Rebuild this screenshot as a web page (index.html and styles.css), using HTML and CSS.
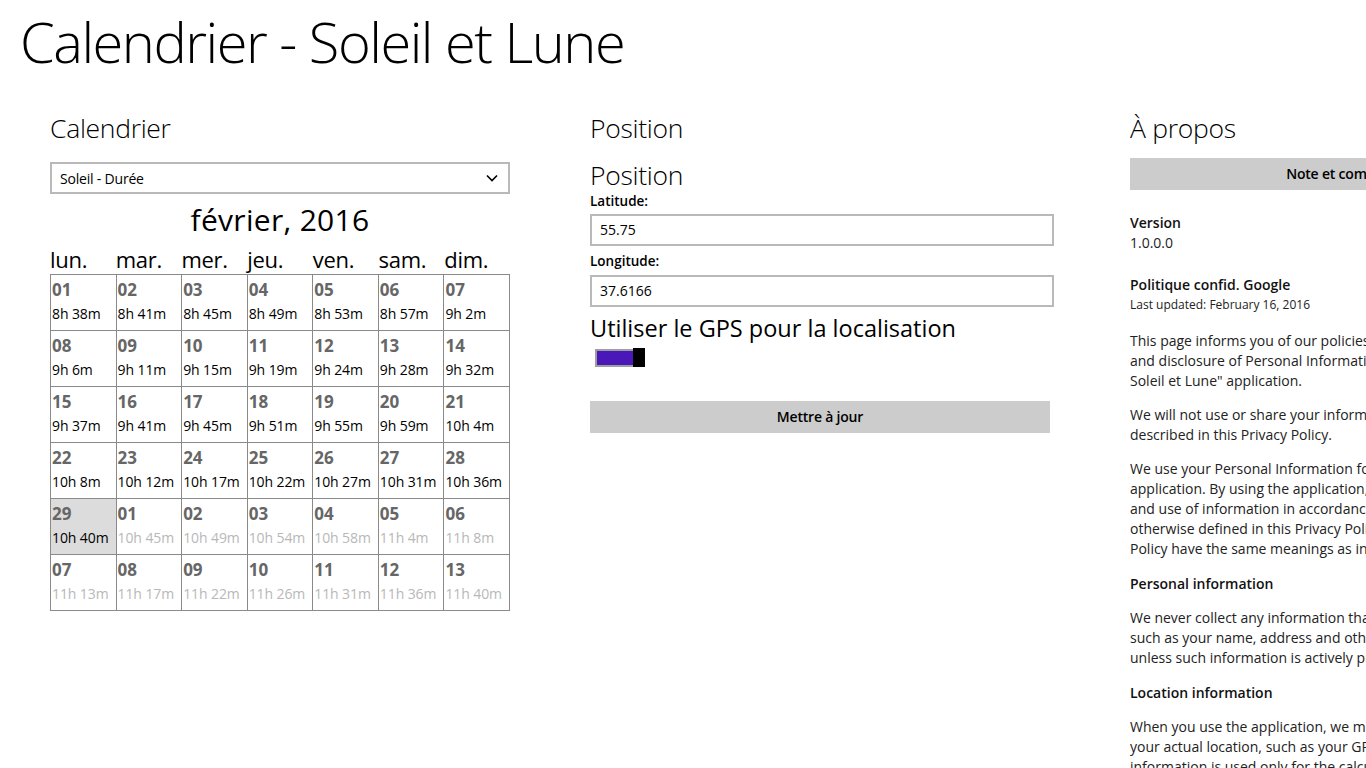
FILE: index.html
```html
<!DOCTYPE html>
<html lang="fr">
<head>
<meta charset="utf-8">
<title>Calendrier - Soleil et Lune</title>
<link rel="stylesheet" href="styles.css">
</head>
<body>
<h1 class="app-title">Calendrier - Soleil et Lune</h1>
<main class="hub">
  <section class="col col-cal">
    <h2 class="col-head">Calendrier</h2>
    <div class="select">
      <span>Soleil - Durée</span>
      <svg class="chev" width="12" height="8" viewBox="0 0 12 8"><path d="M1 1.5 L6 6.5 L11 1.5" fill="none" stroke="#000" stroke-width="1.6"/></svg>
    </div>
    <div class="month">février, 2016</div>
    <div class="weekdays">
      <span>lun.</span><span>mar.</span><span>mer.</span><span>jeu.</span><span>ven.</span><span>sam.</span><span>dim.</span>
    </div>
    <div class="grid">
      <div class="cell"><b>01</b><span>8h 38m</span></div>
      <div class="cell"><b>02</b><span>8h 41m</span></div>
      <div class="cell"><b>03</b><span>8h 45m</span></div>
      <div class="cell"><b>04</b><span>8h 49m</span></div>
      <div class="cell"><b>05</b><span>8h 53m</span></div>
      <div class="cell"><b>06</b><span>8h 57m</span></div>
      <div class="cell"><b>07</b><span>9h 2m</span></div>
      <div class="cell"><b>08</b><span>9h 6m</span></div>
      <div class="cell"><b>09</b><span>9h 11m</span></div>
      <div class="cell"><b>10</b><span>9h 15m</span></div>
      <div class="cell"><b>11</b><span>9h 19m</span></div>
      <div class="cell"><b>12</b><span>9h 24m</span></div>
      <div class="cell"><b>13</b><span>9h 28m</span></div>
      <div class="cell"><b>14</b><span>9h 32m</span></div>
      <div class="cell"><b>15</b><span>9h 37m</span></div>
      <div class="cell"><b>16</b><span>9h 41m</span></div>
      <div class="cell"><b>17</b><span>9h 45m</span></div>
      <div class="cell"><b>18</b><span>9h 51m</span></div>
      <div class="cell"><b>19</b><span>9h 55m</span></div>
      <div class="cell"><b>20</b><span>9h 59m</span></div>
      <div class="cell"><b>21</b><span>10h 4m</span></div>
      <div class="cell"><b>22</b><span>10h 8m</span></div>
      <div class="cell"><b>23</b><span>10h 12m</span></div>
      <div class="cell"><b>24</b><span>10h 17m</span></div>
      <div class="cell"><b>25</b><span>10h 22m</span></div>
      <div class="cell"><b>26</b><span>10h 27m</span></div>
      <div class="cell"><b>27</b><span>10h 31m</span></div>
      <div class="cell"><b>28</b><span>10h 36m</span></div>
      <div class="cell today"><b>29</b><span>10h 40m</span></div>
      <div class="cell other"><b>01</b><span>10h 45m</span></div>
      <div class="cell other"><b>02</b><span>10h 49m</span></div>
      <div class="cell other"><b>03</b><span>10h 54m</span></div>
      <div class="cell other"><b>04</b><span>10h 58m</span></div>
      <div class="cell other"><b>05</b><span>11h 4m</span></div>
      <div class="cell other"><b>06</b><span>11h 8m</span></div>
      <div class="cell other"><b>07</b><span>11h 13m</span></div>
      <div class="cell other"><b>08</b><span>11h 17m</span></div>
      <div class="cell other"><b>09</b><span>11h 22m</span></div>
      <div class="cell other"><b>10</b><span>11h 26m</span></div>
      <div class="cell other"><b>11</b><span>11h 31m</span></div>
      <div class="cell other"><b>12</b><span>11h 36m</span></div>
      <div class="cell other"><b>13</b><span>11h 40m</span></div>
    </div>
  </section>

  <section class="col col-pos">
    <h2 class="col-head">Position</h2>
    <h3 class="sub-head">Position</h3>
    <label class="lbl lbl-lat">Latitude:</label>
    <div class="field field-lat">55.75</div>
    <label class="lbl lbl-lon">Longitude:</label>
    <div class="field field-lon">37.6166</div>
    <div class="gps">Utiliser le GPS pour la localisation</div>
    <div class="toggle"><span class="track"></span><span class="thumb"></span></div>
    <div class="btn">Mettre à jour</div>
  </section>

  <section class="col col-about">
    <h2 class="col-head">À propos</h2>
    <div class="btn btn-rate">Note et commentaires</div>
    <h4 class="a-head a-version">Version</h4>
    <p class="a-line">1.0.0.0</p>
    <h4 class="a-head a-policy">Politique confid. Google</h4>
    <p class="a-small">Last updated: February 16, 2016</p>
    <p class="a-par">This page informs you of our policies regarding the collection, use<br>and disclosure of Personal Information when you use the "Calendrier -<br>Soleil et Lune" application.</p>
    <p class="a-par">We will not use or share your information with anyone except as<br>described in this Privacy Policy.</p>
    <p class="a-par">We use your Personal Information for providing and improving the<br>application. By using the application, you agree to the collection<br>and use of information in accordance with this policy. Unless<br>otherwise defined in this Privacy Policy, terms used in this Privacy<br>Policy have the same meanings as in our Terms and Conditions.</p>
    <h4 class="a-head">Personal information</h4>
    <p class="a-par">We never collect any information that can be used to identify you,<br>such as your name, address and other personal identifying details,<br>unless such information is actively provided by you.</p>
    <h4 class="a-head">Location information</h4>
    <p class="a-par">When you use the application, we may use information about<br>your actual location, such as your GPS coordinates. This<br>information is used only for the calculations of the application.</p>
  </section>
</main>
</body>
</html>
```

FILE: styles.css
```css
html, body {
  margin: 0;
  padding: 0;
  overflow: hidden;
  background: #fff;
  width: 1366px;
  height: 768px;
}
body {
  font-family: "Open Sans", "Noto Sans", sans-serif;
  color: #000;
}
.app-title {
  margin: 0;
  padding: 8px 0 0 20px;
  font-size: 56px;
  font-weight: 300;
  line-height: 67px;
  letter-spacing: -1.5px;
  white-space: nowrap;
}
.hub {
  display: flex;
  align-items: flex-start;
  padding: 37px 0 0 50px;
  width: 2000px;
}
.col {
  flex: 0 0 460px;
  min-width: 0;
  margin-right: 80px;
}
.col-head {
  margin: 0;
  font-size: 26.5px;
  font-weight: 300;
  line-height: 32px;
  letter-spacing: -0.3px;
  white-space: nowrap;
}

/* Calendar */
.select {
  margin-top: 18px;
  height: 28px;
  border: 2px solid #b9b9b9;
  display: flex;
  align-items: center;
  justify-content: space-between;
  padding: 0 10px 0 8px;
  font-size: 14px;
  letter-spacing: -0.2px;
}
.month {
  margin-top: 8px;
  text-align: center;
  font-size: 30px;
  line-height: 36px;
  letter-spacing: 0.3px;
}
.weekdays {
  margin-top: 8px;
  display: grid;
  grid-template-columns: repeat(7, 1fr);
  font-size: 22px;
  line-height: 26px;
  letter-spacing: -0.3px;
}
.grid {
  margin-top: 2px;
  display: grid;
  grid-template-columns: repeat(7, 1fr);
  border-top: 1px solid #8a8a8a;
  border-left: 1px solid #8a8a8a;
}
.cell {
  border-right: 1px solid #8a8a8a;
  border-bottom: 1px solid #8a8a8a;
  display: flex;
  flex-direction: column;
  padding: 5px 0 0 1px;
  box-sizing: border-box;
  height: 56px;
  overflow: hidden;
  white-space: nowrap;
}
.cell b {
  font-size: 17px;
  line-height: 20px;
  color: #666;
  font-weight: 700;
}
.cell span {
  margin-top: 4px;
  font-size: 14px;
  line-height: 20px;
  letter-spacing: -0.1px;
  color: #000;
}
.cell.today { background: #dcdcdc; }
.cell.other span { color: #b8b8b8; }

/* Position */
.sub-head {
  margin: 15px 0 0;
  font-size: 26.5px;
  font-weight: 300;
  line-height: 32px;
  letter-spacing: -0.3px;
}
.lbl {
  display: block;
  font-size: 13.5px;
  font-weight: 600;
  line-height: 20px;
}
.lbl-lat { margin-top: 0; }
.field {
  width: 464px;
  box-sizing: border-box;
  height: 32px;
  border: 2px solid #b9b9b9;
  padding: 0 8px;
  font-size: 14px;
  line-height: 28px;
}
.field-lat { margin-top: 3px; margin-bottom: 5px; }
.field-lon { margin-top: 4px; margin-bottom: 6px; }
.gps {
  font-size: 23.5px;
  line-height: 30px;
  letter-spacing: 0;
  white-space: nowrap;
}
.toggle {
  position: relative;
  margin: 5px 0 0 5px;
  width: 50px;
  height: 19px;
}
.track {
  position: absolute;
  left: 0;
  top: 1px;
  width: 38px;
  height: 14px;
  border: 2px solid #9e9e9e;
  background: #4a17b8;
}
.thumb {
  position: absolute;
  left: 38px;
  top: 0;
  width: 12px;
  height: 19px;
  background: #000;
}
.btn {
  margin-top: 34px;
  width: 460px;
  height: 32px;
  background: #cccccc;
  text-align: center;
  font-size: 14px;
  font-weight: 600;
  line-height: 32px;
  letter-spacing: -0.2px;
}

/* About */
.col-about { color: #222; }
.col-about .col-head { color: #000; }
.btn-rate {
  margin-top: 14px;
  color: #000;
}
.a-head {
  margin: 15px 0 0;
  font-size: 14px;
  font-weight: 600;
  line-height: 20px;
  color: #111;
  white-space: nowrap;
}
.a-version { margin-top: 23px; }
.a-policy { margin-top: 22px; }
.a-line {
  margin: 0;
  font-size: 14px;
  line-height: 20px;
}
.a-small {
  margin: 0;
  font-size: 12px;
  line-height: 20px;
}
.a-par {
  margin: 14px 0 0;
  font-size: 14px;
  line-height: 20px;
  white-space: nowrap;
  letter-spacing: 0;
}
.a-small + .a-par { margin-top: 16px; }
```
